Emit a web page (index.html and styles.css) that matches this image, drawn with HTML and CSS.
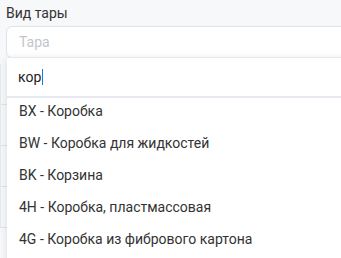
FILE: index.html
```html
<!DOCTYPE html>
<html lang="ru">
<head>
    <meta charset="UTF-8">
    <meta name="viewport" content="width=device-width, initial-scale=1.0">
    <title>Вид тары</title>
    <link rel="stylesheet" href="styles.css">
</head>
<body>
    <div class="page">
        <div class="field">
            <label class="field-label" for="packType">Вид тары</label>
            <div class="select">
                <input class="select-input" id="packType" type="text" placeholder="Тара" readonly>
                <div class="dropdown">
                    <div class="dropdown-search">кор<span class="caret"></span></div>
                    <ul class="dropdown-list">
                        <li>BX - Коробка</li>
                        <li>BW - Коробка для жидкостей</li>
                        <li>BK - Корзина</li>
                        <li>4H - Коробка, пластмассовая</li>
                        <li>4G - Коробка из фибрового картона</li>
                    </ul>
                </div>
            </div>
            <div class="under">
                <div class="under-row"></div>
                <div class="under-row"></div>
                <div class="under-row"></div>
                <div class="under-row"></div>
            </div>
        </div>
    </div>
</body>
</html>
```

FILE: styles.css
```css
body {
    font-family: Roboto, "Liberation Sans", sans-serif;
    font-size: 14px;
    margin: 0;
    background-color: #f7f8fa;
    color: #333;
}
.page {
    height: 100vh;
    overflow: hidden;
}
.field {
    padding: 3px 0 0 6px;
    width: 380px;
}
.field-label {
    display: block;
    line-height: 20px;
    height: 23px;
    color: #333;
}
.select {
    position: relative;
}
.select-input {
    display: block;
    box-sizing: border-box;
    width: 100%;
    height: 32px;
    padding: 0 12px;
    border: 1px solid #dfe3ea;
    border-radius: 6px;
    background: #fff;
    font-family: inherit;
    font-size: 14px;
    outline: none;
}
.select-input::placeholder {
    color: #c3c6cc;
}
.dropdown {
    position: absolute;
    top: 31px;
    left: 1px;
    right: 0;
    background: #fff;
    box-shadow: 0 2px 8px rgba(0, 0, 0, 0.12);
    border-top: 1px solid #e3e7ee;
    z-index: 2;
}
.dropdown-search {
    height: 38px;
    line-height: 38px;
    padding-left: 11px;
    color: #222;
    border-bottom: 2px solid #e6e9ef;
}
.caret {
    display: inline-block;
    width: 1px;
    height: 16px;
    background: #1a73e8;
    vertical-align: -3px;
    margin-left: 1px;
}
.dropdown-list {
    list-style: none;
    margin: -1px 0 0;
    padding: 0 0 8px;
}
.dropdown-list li {
    line-height: 28px;
    padding: 0 0 4px 12px;
    color: #333;
}
.under {
    margin: 6px 0 0 -6px;
    border-left: 1px solid #e4e7ed;
}
.under-row {
    height: 40px;
    border-bottom: 1px solid #dfe3ea;
}
```
